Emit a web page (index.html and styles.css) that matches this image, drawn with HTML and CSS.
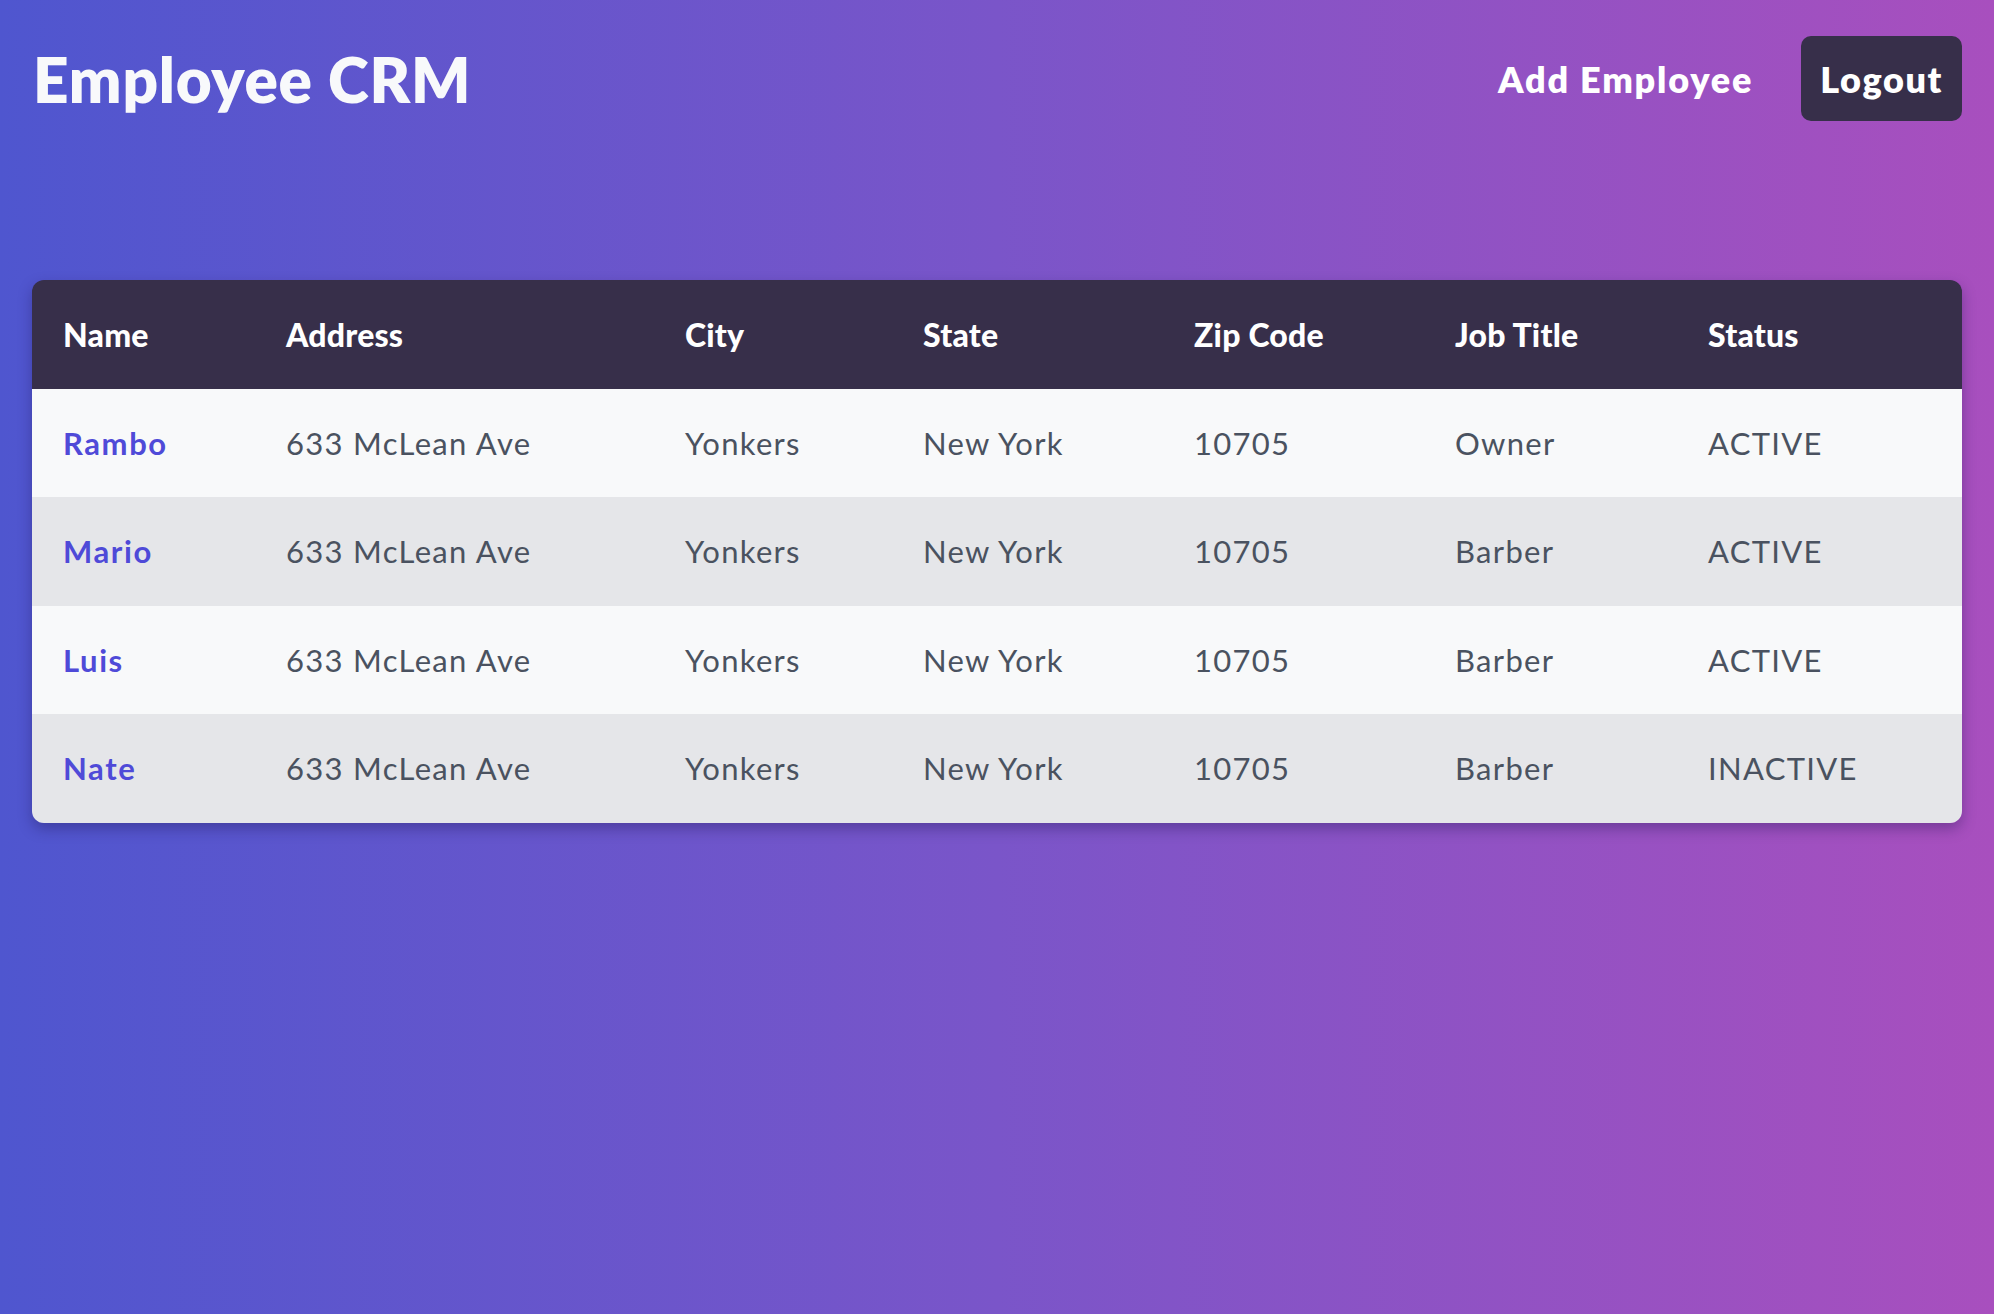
FILE: index.html
```html
<!DOCTYPE html>
<html lang="en">
<head>
<meta charset="utf-8">
<title>Employee CRM</title>
<link rel="stylesheet" href="styles.css">
</head>
<body>
<div class="page">
  <header class="topbar">
    <h1 class="brand">Employee CRM</h1>
    <nav class="actions">
      <a class="nav-link" href="#">Add Employee</a>
      <button class="logout" type="button">Logout</button>
    </nav>
  </header>
  <main class="content">
    <div class="card">
      <table class="grid">
        <colgroup>
          <col class="c-name"><col class="c-addr"><col class="c-city"><col class="c-state"><col class="c-zip"><col class="c-job"><col class="c-status">
        </colgroup>
        <thead>
          <tr><th>Name</th><th>Address</th><th>City</th><th>State</th><th>Zip Code</th><th>Job Title</th><th>Status</th></tr>
        </thead>
        <tbody>
          <tr><td><a class="emp" href="#">Rambo</a></td><td>633 McLean Ave</td><td>Yonkers</td><td>New York</td><td>10705</td><td>Owner</td><td>ACTIVE</td></tr>
          <tr><td><a class="emp" href="#">Mario</a></td><td>633 McLean Ave</td><td>Yonkers</td><td>New York</td><td>10705</td><td>Barber</td><td>ACTIVE</td></tr>
          <tr><td><a class="emp" href="#">Luis</a></td><td>633 McLean Ave</td><td>Yonkers</td><td>New York</td><td>10705</td><td>Barber</td><td>ACTIVE</td></tr>
          <tr><td><a class="emp" href="#">Nate</a></td><td>633 McLean Ave</td><td>Yonkers</td><td>New York</td><td>10705</td><td>Barber</td><td>INACTIVE</td></tr>
        </tbody>
      </table>
    </div>
  </main>
</div>
</body>
</html>
```

FILE: styles.css
```css
* { box-sizing: border-box; }
html, body { margin: 0; height: 100%; }
body {
  font-family: "Lato", "Noto Sans", sans-serif;
  background: linear-gradient(to right, #4f56cf 0%, #7a55c9 50%, #a84fbe 100%);
  min-height: 1314px;
}
.page { padding: 0 32px; }
.topbar {
  display: flex;
  align-items: center;
  justify-content: space-between;
  height: 157px;
}
.brand {
  margin: 0;
  color: #f8f9fb;
  font-size: 62px;
  font-weight: 800;
  letter-spacing: 0.8px;
  padding-left: 1px;
}
.actions { display: flex; align-items: center; gap: 48px; }
.nav-link {
  color: #fff;
  text-decoration: none;
  font-size: 36px;
  font-weight: 800;
  letter-spacing: 1.8px;
}
.logout {
  font-family: inherit;
  background: #372f4a;
  color: #fff;
  border: 0;
  border-radius: 10px;
  font-size: 36px;
  font-weight: 800;
  letter-spacing: 1.6px;
  height: 85px;
  padding: 0 19px;
}
.content { padding-top: 123px; }
.card {
  border-radius: 12px;
  overflow: hidden;
  box-shadow: 0 6px 14px rgba(30, 20, 80, 0.35);
}
.grid { width: 100%; border-collapse: collapse; table-layout: fixed; }
.c-name { width: 223px; }
.c-addr { width: 399px; }
.c-city { width: 238px; }
.c-state { width: 271px; }
.c-zip { width: 261px; }
.c-job { width: 253px; }
th, td { text-align: left; padding: 0 0 0 31px; height: 108.5px; }
th {
  background: #372f4a;
  color: #fff;
  font-size: 32px;
  font-weight: 900;
  letter-spacing: 0.2px;
}
td { font-size: 31px; color: #4a5260; letter-spacing: 1.3px; }
tbody tr:nth-child(odd) td { background: #f8f9fa; }
tbody tr:nth-child(even) td { background: #e5e6e9; }
.emp { color: #4f4ad8; text-decoration: none; font-weight: 700; letter-spacing: 1.6px; }
```
